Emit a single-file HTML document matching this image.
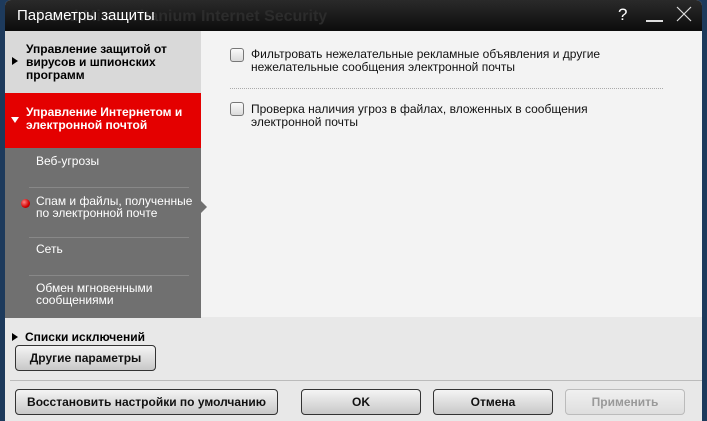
<!DOCTYPE html>
<html><head><meta charset="utf-8"><style>
*{margin:0;padding:0;box-sizing:border-box}
body{width:707px;height:421px;overflow:hidden;background:#1d3a5c;font-family:"Liberation Sans",sans-serif;position:relative}
.win{position:absolute;left:5px;top:0;width:697px;height:421px;background:#e8e8e8;border-radius:6px 6px 0 0;overflow:hidden}
.title{position:absolute;left:0;top:0;width:697px;height:31px;background:linear-gradient(#2a2a2a,#0c0c0c);color:#fff;font-size:15px}
.title .t{position:absolute;left:12px;top:7px}
.title .g{position:absolute;left:30px;top:8px;color:#2c2c2c;font-size:16px;font-weight:bold}
.left{position:absolute;left:0;top:31px;width:196px}
.sec1{height:62px;background:#d9d9d9;position:relative}
.sec2{height:55px;background:#e40000;position:relative;color:#fff}
.sec3{height:170px;background:#707070;position:relative;color:#fff;font-size:12px}
.b{font-weight:bold;font-size:12px;line-height:13px;position:absolute;left:21px}
.tri{position:absolute;width:0;height:0}
.item{position:absolute;left:31px;line-height:12px}
.sep{position:absolute;left:24px;width:160px;height:1px;background:#888}
.content{position:absolute;left:196px;top:31px;width:501px;height:286px;background:#f3f3f3}
.cb{position:absolute;left:29px;width:14px;height:14px;border:1px solid #777;border-radius:3px;background:linear-gradient(#fafafa,#dadada)}
.ct{position:absolute;left:50px;font-size:12px;line-height:13px;color:#111}
.btn{position:absolute;height:26px;border:1px solid #333;border-radius:4px;background:linear-gradient(#f4f4f4,#c8c8c8);font-weight:bold;font-size:12px;text-align:center;line-height:24px;color:#111}
</style></head><body>
<div class="win">
<div class="title"><span class="g">Trend Micro Titanium Internet Security</span><span class="t">Параметры защиты</span>
<span style="position:absolute;left:613px;top:5px;font-size:17px">?</span>
<span style="position:absolute;left:641px;top:20px;width:17px;height:2px;background:#ddd"></span>
<svg style="position:absolute;left:671px;top:6px" width="16" height="16"><path d="M1 1L15 15M15 1L1 15" stroke="#ddd" stroke-width="1.2"/></svg>
</div>
<div class="content">
<div class="cb" style="top:17px"></div>
<div class="ct" style="top:17px">Фильтровать нежелательные рекламные объявления и другие<br>нежелательные сообщения электронной почты</div>
<div style="position:absolute;left:29px;top:57px;width:433px;border-top:1px dotted #aaa"></div>
<div class="cb" style="top:71px"></div>
<div class="ct" style="top:72px">Проверка наличия угроз в файлах, вложенных в сообщения<br>электронной почты</div>
</div>
<div class="left">
<div class="sec1"><div class="tri" style="left:7px;top:26px;border-left:6px solid #000;border-top:4px solid transparent;border-bottom:4px solid transparent"></div>
<div class="b" style="top:12px">Управление защитой от<br>вирусов и шпионских<br>программ</div></div>
<div class="sec2"><div class="tri" style="left:6px;top:24px;border-top:6px solid #fff;border-left:4px solid transparent;border-right:4px solid transparent"></div>
<div class="b" style="top:13px">Управление Интернетом и<br>электронной почтой</div></div>
<div class="sec3">
<div class="item" style="top:7px">Веб-угрозы</div>
<div class="sep" style="top:39px"></div>
<div style="position:absolute;left:16px;top:51px;width:9px;height:9px;border-radius:50%;background:radial-gradient(circle at 35% 35%,#ff8080,#d00000 60%,#700)"></div>
<div class="item" style="top:47px">Спам и файлы, полученные<br>по электронной почте</div>
<div class="tri" style="left:196px;top:53px;border-left:6px solid #707070;border-top:6px solid transparent;border-bottom:6px solid transparent"></div>
<div class="sep" style="top:89px"></div>
<div class="item" style="top:95px">Сеть</div>
<div class="sep" style="top:127px"></div>
<div class="item" style="top:134px">Обмен мгновенными<br>сообщениями</div>
</div>
<div class="tri" style="left:7px;top:302px;border-left:6px solid #000;border-top:4px solid transparent;border-bottom:4px solid transparent"></div>
<div class="b" style="top:300px;left:20px">Списки исключений</div>
</div>
<div class="btn" style="left:10px;top:345px;width:141px">Другие параметры</div>
<div style="position:absolute;left:5px;top:380px;width:692px;height:1px;background:#bbb"></div>
<div class="btn" style="left:10px;top:389px;width:263px">Восстановить настройки по умолчанию</div>
<div class="btn" style="left:296px;top:389px;width:120px">OK</div>
<div class="btn" style="left:428px;top:389px;width:120px">Отмена</div>
<div class="btn" style="left:560px;top:389px;width:120px;border-color:#bbb;color:#999;background:linear-gradient(#f0f0f0,#dedede)">Применить</div>
</div>
</body></html>
